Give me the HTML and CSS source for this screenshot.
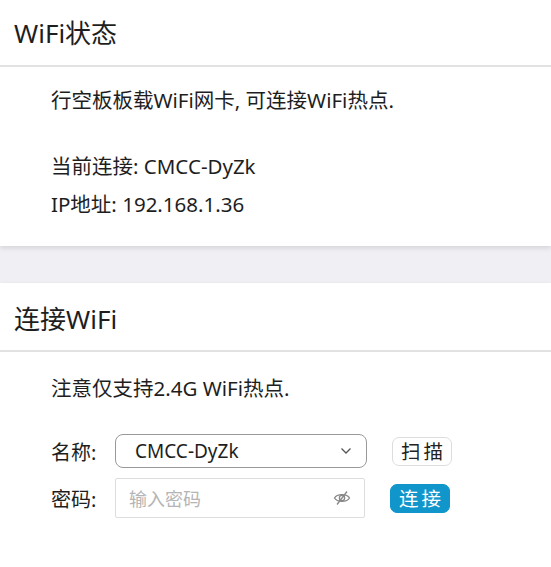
FILE: index.html
```html
<!DOCTYPE html>
<html lang="zh-CN">
<head>
    <meta charset="UTF-8">
    <meta name="viewport" content="width=device-width, initial-scale=1.0">
    <title>WiFi设置</title>
    <link rel="stylesheet" href="styles.css">
</head>
<body>
<div class="page">
    <div class="card status-card">
        <div class="card-title">WiFi状态</div>
        <div class="card-body">
            <p class="intro">行空板板载WiFi网卡, 可连接WiFi热点.</p>
            <p class="info">当前连接: CMCC-DyZk</p>
            <p class="info">IP地址: 192.168.1.36</p>
        </div>
    </div>
    <div class="card connect-card">
        <div class="card-title">连接WiFi</div>
        <div class="card-body">
            <p class="intro">注意仅支持2.4G WiFi热点.</p>
            <div class="form-row">
                <label class="form-label">名称:</label>
                <div class="select-box">
                    <span>CMCC-DyZk</span>
                    <svg class="chevron" width="12" height="8" viewBox="0 0 12 8">
                        <path d="M1.5 1.5 L6 6 L10.5 1.5" fill="none" stroke="#555" stroke-width="1.3"/>
                    </svg>
                </div>
                <button class="btn btn-plain">扫描</button>
            </div>
            <div class="form-row">
                <label class="form-label">密码:</label>
                <div class="input-box">
                    <span class="placeholder">输入密码</span>
                    <svg class="eye" width="18" height="16" viewBox="0 0 18 16">
                        <path d="M1.5 8 C4 3.5 14 3.5 16.5 8 C14 12.5 4 12.5 1.5 8 Z" fill="none" stroke="#888" stroke-width="1.3"/>
                        <circle cx="9" cy="8" r="2.6" fill="none" stroke="#888" stroke-width="1.3"/>
                        <path d="M14 1.5 L4 14.5" stroke="#888" stroke-width="1.3"/>
                    </svg>
                </div>
                <button class="btn btn-primary">连接</button>
            </div>
        </div>
    </div>
</div>
</body>
</html>
```

FILE: styles.css
```css
body {
    margin: 0;
    font-family: "Noto Sans", "Noto Sans CJK SC", sans-serif;
    color: #1e1e1e;
    background-color: #f0f0f4;
}
p {
    margin: 0;
}
.card {
    background-color: #fff;
    box-shadow: 0 2px 5px rgba(0, 0, 0, 0.12);
}
.status-card {
    margin-bottom: 37px;
    height: 246px;
}
.connect-card {
    height: 300px;
}
.card-title {
    height: 65px;
    line-height: 66px;
    padding-left: 14px;
    font-size: 26px;
    border-bottom: 2px solid #e2e2e2;
}
.connect-card .card-title {
    height: 67px;
    line-height: 72px;
}
.card-body {
    padding: 20px 0 0 51px;
    font-size: 20.5px;
}
.intro {
    line-height: 26px;
    margin-bottom: 40px;
}
.connect-card .card-body {
    padding-top: 23px;
}
.connect-card .intro {
    margin-bottom: 33px;
}
.info {
    line-height: 26px;
    margin-bottom: 12px;
}
.form-row {
    display: flex;
    align-items: center;
    margin-bottom: 10px;
}
.form-label {
    width: 64px;
    font-size: 20px;
}
.select-box {
    box-sizing: border-box;
    width: 252px;
    height: 34px;
    border: 1px solid #999;
    border-radius: 8px;
    display: flex;
    align-items: center;
    justify-content: space-between;
    padding: 0 14px 0 19px;
    font-size: 19px;
}
.input-box {
    box-sizing: border-box;
    width: 250px;
    height: 40px;
    border: 1px solid #ddd;
    border-radius: 2px;
    display: flex;
    align-items: center;
    justify-content: space-between;
    padding: 0 13px 0 13px;
}
.placeholder {
    color: #b5b5b5;
    font-size: 18px;
}
.btn {
    font-family: inherit;
    font-size: 19.5px;
    height: 29px;
    padding: 0 5px 0 8px;
    letter-spacing: 3px;
    border-radius: 7px;
    cursor: pointer;
    line-height: 27px;
}
.btn-plain {
    margin-left: 25px;
    background-color: #fff;
    border: 1px solid #ddd;
    color: #222;
}
.btn-primary {
    margin-left: 25px;
    background-color: #1196cc;
    border: 1px solid #1196cc;
    color: #fff;
}
```
